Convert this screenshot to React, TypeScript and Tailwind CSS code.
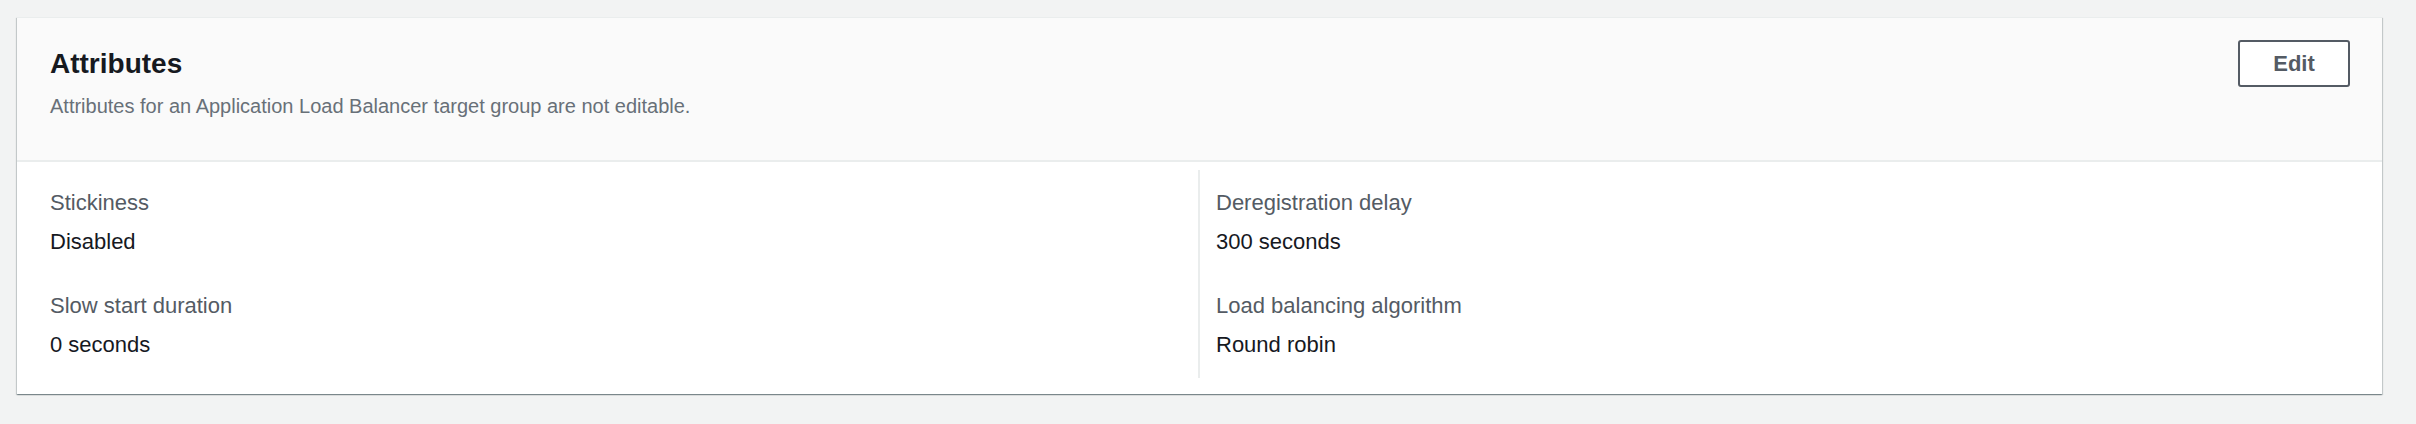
const attributes = [
  [
    { label: 'Stickiness', value: 'Disabled' },
    { label: 'Slow start duration', value: '0 seconds' },
  ],
  [
    { label: 'Deregistration delay', value: '300 seconds' },
    { label: 'Load balancing algorithm', value: 'Round robin' },
  ],
];

function KeyValue({ label, value }: { label: string; value: string }) {
  return (
    <div className="flex flex-col gap-[11px]">
      <div className="text-[22px] leading-[28px] text-[#545b64]">{label}</div>
      <div className="text-[22px] leading-[28px] text-[#16191f]">{value}</div>
    </div>
  );
}

export default function App() {
  return (
    <div className="min-h-screen h-[424px] bg-[#f2f3f3] pt-[17px] pl-[17px] font-['Liberation_Sans',Arial,sans-serif]">
      <div className="w-[2365px] bg-white border-t border-[#eaeded] shadow-[0_1px_1px_0_rgba(0,28,36,0.3),1px_1px_1px_0_rgba(0,28,36,0.15),-1px_1px_1px_0_rgba(0,28,36,0.15)]">
        {/* header */}
        <div className="flex items-start justify-between bg-[#fafafa] border-b-2 border-[#eaeded] pl-[33px] pr-[32px] pt-[22px] pb-[41px]">
          <div className="mt-[7px] flex flex-col gap-[12px]">
            <h2 className="text-[28px] leading-[34px] font-bold text-[#16191f]">Attributes</h2>
            <p className="text-[20px] leading-[26px] text-[#687078]">
              Attributes for an Application Load Balancer target group are not editable.
            </p>
          </div>
          <button className="flex h-[47px] w-[112px] items-center justify-center rounded-[3px] border-2 border-[#545b64] bg-white text-[22px] font-bold text-[#545b64]">
            Edit
          </button>
        </div>

        {/* body */}
        <div className="grid grid-cols-[1148px_1fr] pl-[33px] pt-[8px] pb-[16px]">
          {attributes.map((col, i) => (
            <div
              key={i}
              className={
                i === 0
                  ? 'flex flex-col gap-[36px] py-[19px]'
                  : 'flex flex-col gap-[36px] py-[19px] pl-[16px] border-l-2 border-[#eaeded]'
              }
            >
              {col.map((item) => (
                <KeyValue key={item.label} label={item.label} value={item.value} />
              ))}
            </div>
          ))}
        </div>
      </div>
    </div>
  );
}
